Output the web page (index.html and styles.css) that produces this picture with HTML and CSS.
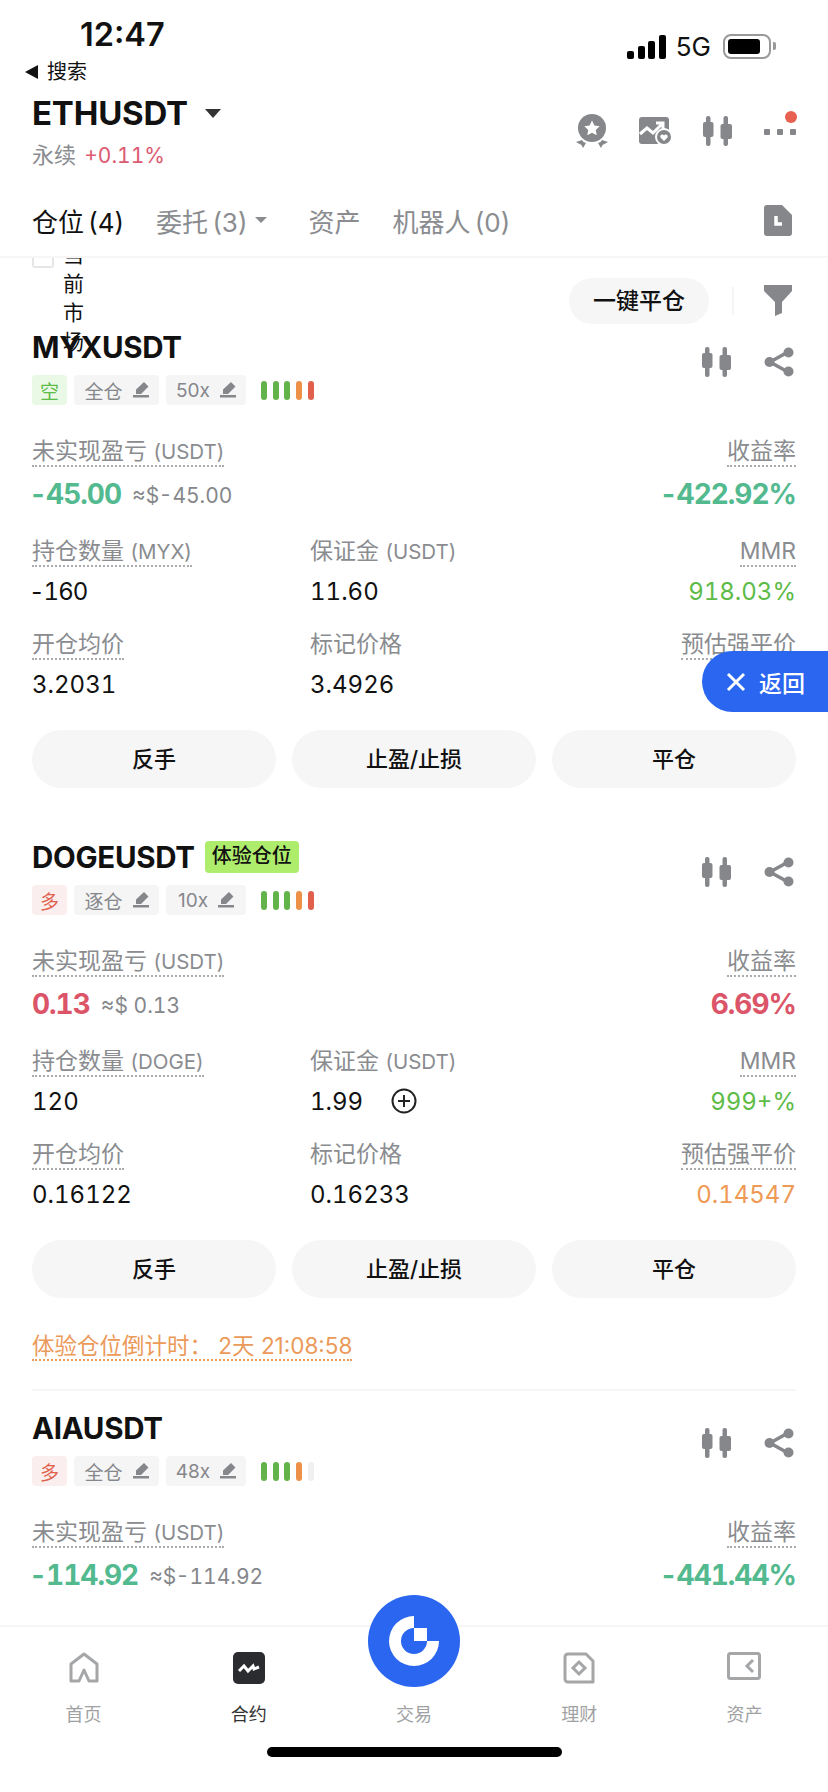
FILE: index.html
```html
<!DOCTYPE html>
<html lang="zh">
<head>
  <meta charset="UTF-8">
  <title>ETHUSDT</title>
  <link rel="stylesheet" href="styles.css">
</head>
<body>
  <svg class="defs" width="0" height="0">
    <symbol id="candle" viewBox="0 0 30 30">
      <rect x="3" y="0" width="4.500" height="30" rx="2" fill="#85878b"/>
      <rect x="0" y="6" width="10.500" height="15" rx="2" fill="#85878b"/>
      <rect x="20.500" y="0" width="4.500" height="30" rx="2" fill="#85878b"/>
      <rect x="17.500" y="8" width="11.500" height="15" rx="2" fill="#85878b"/>
    </symbol>
    <symbol id="share" viewBox="0 0 30 30">
      <path d="M24 5 6 15l18 10" fill="none" stroke="#85878b" stroke-width="3.500"/>
      <circle cx="24.500" cy="5.500" r="5" fill="#85878b"/>
      <circle cx="5.500" cy="15" r="5" fill="#85878b"/>
      <circle cx="24.500" cy="24.500" r="5" fill="#85878b"/>
    </symbol>
    <symbol id="pencil" viewBox="0 0 16 16">
      <path d="M11 0l4.500 4.500-7.500 7.500H3V7.500zM0 13h16v2.500H0z" fill="#85878b"/>
    </symbol>
  </svg>

  <div class="page">
    <div class="status">
      <span class="time">12:47</span>
      <div class="status-right">
        <span class="signal"><i></i><i></i><i></i><i></i></span>
        <span class="net">5G</span>
        <span class="battery"><b></b></span>
      </div>
    </div>
    <div class="back"><span class="back-arrow"></span>搜索</div>

    <div class="head">
      <div>
        <div class="symbol">ETHUSDT<span class="caret"></span></div>
        <div class="sub">永续 <span class="up">+0.11%</span></div>
      </div>
      <div class="head-icons">
        <svg width="34" height="35" viewBox="0 0 34 35"><circle cx="17" cy="14" r="14" fill="#85878b"/><path d="M17 6.500l2.400 4.900 5.300.8-3.900 3.700.9 5.300-4.700-2.500-4.700 2.500.9-5.300-3.900-3.700 5.300-.8z" fill="#fff"/><path d="M1 28l6-2 1.500 2L11 29l-3 5-1.500-3zM33 28l-6-2-1.500 2-2.500 1 3 5 1.500-3z" fill="#85878b"/></svg>
        <svg width="34" height="28" viewBox="0 0 34 28"><path d="M3 0h24a3 3 0 0 1 3 3v24H3a3 3 0 0 1-3-3V3a3 3 0 0 1 3-3z" fill="#85878b"/><path d="M1 17l7-6 6 5 9-9M17 6h7v7" fill="none" stroke="#fff" stroke-width="3"/><circle cx="25" cy="20" r="8" fill="#85878b" stroke="#fff" stroke-width="2"/><path d="M25 24l-3.500-3.500a2 2 0 0 1 3.500-2 2 2 0 0 1 3.500 2z" fill="#fff"/></svg>
        <svg width="30" height="30"><use href="#candle"/></svg>
        <span class="more"><i></i><i></i><i></i><b></b></span>
      </div>
    </div>

    <div class="tabs">
      <span class="tab active">仓位 (4)</span>
      <span class="tab tab-orders">委托 (3)<span class="tab-caret"></span></span>
      <span class="tab">资产</span>
      <span class="tab">机器人 (0)</span>
      <svg class="tab-doc" width="28" height="31" viewBox="0 0 28 31"><path d="M3 0h15l10 10v18a3 3 0 0 1-3 3H3a3 3 0 0 1-3-3V3a3 3 0 0 1 3-3z" fill="#85878b"/><path d="M12 11v8h6" fill="none" stroke="#fff" stroke-width="3.500"/></svg>
    </div>

    <div class="content">
      <div class="scroll">
        <div class="toolbar">
          <span class="check"></span>
          <span class="check-label">当前市场</span>
          <span class="close-all">一键平仓</span>
          <span class="tool-sep"></span>
          <svg width="28" height="31" viewBox="0 0 28 31"><path d="M0 0h28v6L18 17v11l-7 3V17L0 6z" fill="#85878b"/></svg>
        </div>

        <div class="card">
          <div class="card-top">
            <div class="card-name">MYXUSDT</div>
            <div class="card-icons">
              <svg width="30" height="30"><use href="#candle"/></svg>
              <svg width="30" height="30"><use href="#share"/></svg>
            </div>
          </div>
          <div class="tags">
            <span class="tag side short">空</span>
            <span class="tag mode">全仓<svg width="16" height="16"><use href="#pencil"/></svg></span>
            <span class="tag lev">50x<svg width="16" height="16"><use href="#pencil"/></svg></span>
            <span class="bars"><i class="g"></i><i class="g"></i><i class="g"></i><i class="o"></i><i class="r"></i></span>
          </div>
          <div class="pnl-row">
            <div>
              <div><span class="label">未实现盈亏 <small>(USDT)</small></span></div>
              <div class="pnl"><span class="pnl-num down">-45.00</span><span class="pnl-usd neg">≈$ -45.00</span></div>
            </div>
            <div class="right">
              <div><span class="label">收益率</span></div>
              <div class="pnl"><span class="pnl-num down">-422.92%</span></div>
            </div>
          </div>
          <div class="grid">
            <div><span class="label">持仓数量 <small>(MYX)</small></span><div class="val neg">-160</div></div>
            <div><span class="label plain">保证金 <small>(USDT)</small></span><div class="val">11.60</div></div>
            <div class="right"><span class="label">MMR</span><div class="val mmr">918.03%</div></div>
            <div><span class="label">开仓均价</span><div class="val">3.2031</div></div>
            <div><span class="label plain">标记价格</span><div class="val">3.4926</div></div>
            <div class="right"><span class="label">预估强平价</span><div class="val"></div></div>
          </div>
          <div class="btns"><span class="btn">反手</span><span class="btn">止盈/止损</span><span class="btn">平仓</span></div>
        </div>

        <div class="card">
          <div class="card-top">
            <div class="card-name">DOGEUSDT<span class="trial">体验仓位</span></div>
            <div class="card-icons">
              <svg width="30" height="30"><use href="#candle"/></svg>
              <svg width="30" height="30"><use href="#share"/></svg>
            </div>
          </div>
          <div class="tags">
            <span class="tag side long">多</span>
            <span class="tag mode">逐仓<svg width="16" height="16"><use href="#pencil"/></svg></span>
            <span class="tag lev">10x<svg width="16" height="16"><use href="#pencil"/></svg></span>
            <span class="bars"><i class="g"></i><i class="g"></i><i class="g"></i><i class="o"></i><i class="r"></i></span>
          </div>
          <div class="pnl-row">
            <div>
              <div><span class="label">未实现盈亏 <small>(USDT)</small></span></div>
              <div class="pnl"><span class="pnl-num gain">0.13</span><span class="pnl-usd">≈$ 0.13</span></div>
            </div>
            <div class="right">
              <div><span class="label">收益率</span></div>
              <div class="pnl"><span class="pnl-num gain">6.69%</span></div>
            </div>
          </div>
          <div class="grid">
            <div><span class="label">持仓数量 <small>(DOGE)</small></span><div class="val">120</div></div>
            <div>
              <span class="label plain">保证金 <small>(USDT)</small></span>
              <div class="val">1.99<svg class="plus" width="26" height="26" viewBox="0 0 26 26"><circle cx="13" cy="13" r="11.500" fill="none" stroke="#222" stroke-width="2"/><path d="M13 7v12M7 13h12" stroke="#222" stroke-width="2"/></svg></div>
            </div>
            <div class="right"><span class="label">MMR</span><div class="val mmr">999+%</div></div>
            <div><span class="label">开仓均价</span><div class="val">0.16122</div></div>
            <div><span class="label plain">标记价格</span><div class="val">0.16233</div></div>
            <div class="right"><span class="label">预估强平价</span><div class="val warn">0.14547</div></div>
          </div>
          <div class="btns"><span class="btn">反手</span><span class="btn">止盈/止损</span><span class="btn">平仓</span></div>
          <div class="countdown"><span>体验仓位倒计时： 2天 21:08:58</span></div>
        </div>

        <div class="card last">
          <div class="card-top">
            <div class="card-name">AIAUSDT</div>
            <div class="card-icons">
              <svg width="30" height="30"><use href="#candle"/></svg>
              <svg width="30" height="30"><use href="#share"/></svg>
            </div>
          </div>
          <div class="tags">
            <span class="tag side long">多</span>
            <span class="tag mode">全仓<svg width="16" height="16"><use href="#pencil"/></svg></span>
            <span class="tag lev">48x<svg width="16" height="16"><use href="#pencil"/></svg></span>
            <span class="bars"><i class="g"></i><i class="g"></i><i class="g"></i><i class="o"></i><i class="e"></i></span>
          </div>
          <div class="pnl-row">
            <div>
              <div><span class="label">未实现盈亏 <small>(USDT)</small></span></div>
              <div class="pnl"><span class="pnl-num down">-114.92</span><span class="pnl-usd neg">≈$ -114.92</span></div>
            </div>
            <div class="right">
              <div><span class="label">收益率</span></div>
              <div class="pnl"><span class="pnl-num down">-441.44%</span></div>
            </div>
          </div>
        </div>
      </div>
    </div>

    <div class="nav">
      <div class="nav-items">
        <div class="nav-item">
          <svg width="32" height="32" viewBox="0 0 32 32"><path d="M3 29h8l5-11 5 11h8V12L16 2 3 12z" fill="none" stroke="#a5a6a8" stroke-width="3" stroke-linejoin="round"/></svg>
          <span>首页</span>
        </div>
        <div class="nav-item active">
          <svg width="32" height="32" viewBox="0 0 32 32"><rect width="32" height="32" rx="5" fill="#2b2c30"/><path d="M6 19l5-5 4 5 5-5 1 3 5-2" fill="none" stroke="#fff" stroke-width="3"/></svg>
          <span>合约</span>
        </div>
        <div class="nav-item"><span class="nav-gap"></span><span>交易</span></div>
        <div class="nav-item">
          <svg width="32" height="32" viewBox="0 0 32 32"><path d="M5 2h18l7 7v21H5a3 3 0 0 1-3-3V5a3 3 0 0 1 3-3z" fill="none" stroke="#a5a6a8" stroke-width="3" stroke-linejoin="round"/><path d="M16 10l6 6-6 6-6-6z" fill="none" stroke="#a5a6a8" stroke-width="3"/></svg>
          <span>理财</span>
        </div>
        <div class="nav-item">
          <svg width="34" height="28" viewBox="0 0 34 28"><rect x="1.500" y="1.500" width="31" height="25" rx="2" fill="none" stroke="#a5a6a8" stroke-width="3"/><path d="M26 8l-6 6 6 6" fill="none" stroke="#a5a6a8" stroke-width="3"/></svg>
          <span>资产</span>
        </div>
      </div>
      <div class="home-bar"></div>
    </div>

    <div class="trade">
      <svg width="92" height="92" viewBox="-46 -46 92 92"><circle r="46" fill="#2a66f0"/><path d="M0-25A25 25 0 1 0 25 0H13A13 13 0 1 1 0-13z" fill="#fff"/><rect x="0" y="-13" width="13" height="13" fill="#fff"/></svg>
    </div>
    <div class="float-back">
      <svg width="20" height="20" viewBox="0 0 20 20"><path d="M2 2l16 16M18 2L2 18" stroke="#fff" stroke-width="3"/></svg>
      返回
    </div>
  </div>
</body>
</html>
```

FILE: styles.css
```css
* {
  box-sizing: border-box;
}

html, body {
  margin: 0;
  padding: 0;
  background: #fff;
}

body {
  font-family: Inter, "Noto Sans CJK SC", sans-serif;
  color: #111;
}

.defs {
  position: absolute;
}

.page {
  position: relative;
  width: 828px;
  height: 1792px;
  overflow: hidden;
  display: flex;
  flex-direction: column;
}

/* Status bar */
.status {
  height: 60px;
  padding: 16px 57px 0 80px;
  display: flex;
  justify-content: space-between;
  align-items: flex-start;
}

.time {
  font-size: 32.500px;
  line-height: 38px;
  font-weight: 600;
}

.status-right {
  display: flex;
  align-items: center;
  gap: 10px;
  padding-top: 18px;
}

.signal {
  display: flex;
  align-items: flex-end;
  gap: 3.500px;
}

.signal i {
  width: 7px;
  background: #000;
  border-radius: 2px;
}

.signal i:nth-child(1) { height: 8px; }
.signal i:nth-child(2) { height: 13px; }
.signal i:nth-child(3) { height: 18px; }
.signal i:nth-child(4) { height: 24px; }

.net {
  font-size: 26px;
  line-height: 24px;
}

.battery {
  position: relative;
  width: 48px;
  height: 25px;
  margin-left: 2px;
  border: 2px solid #999;
  border-radius: 8px;
  padding: 3px;
}

.battery b {
  display: block;
  width: 32px;
  height: 15px;
  background: #000;
  border-radius: 3px;
}

.battery:after {
  content: "";
  position: absolute;
  right: -7px;
  top: 6px;
  width: 3px;
  height: 8px;
  background: #999;
  border-radius: 0 2px 2px 0;
}

.back {
  height: 24px;
  padding-left: 25px;
  display: flex;
  align-items: center;
  gap: 9px;
  font-size: 20px;
  line-height: 24px;
}

.back-arrow {
  width: 0;
  height: 0;
  border-top: 7px solid transparent;
  border-bottom: 7px solid transparent;
  border-right: 13px solid #111;
}

/* Header */
.head {
  height: 84px;
  padding: 9px 32px 0;
  display: flex;
  justify-content: space-between;
}

.symbol {
  display: flex;
  align-items: center;
  font-size: 33px;
  line-height: 40px;
  font-weight: 700;
  letter-spacing: -0.2px;
}

.caret {
  width: 0;
  height: 0;
  margin-left: 17px;
  border-left: 8px solid transparent;
  border-right: 8px solid transparent;
  border-top: 9px solid #333;
}

.sub {
  margin-top: 8px;
  font-size: 22px;
  line-height: 28px;
  color: #8a8c90;
}

.up {
  margin-left: 2px;
  color: #dc5a70;
  font-size: 21px;
  font-feature-settings: "tnum";
}

.head-icons {
  display: flex;
  align-items: center;
  gap: 30px;
  height: 56px;
  margin-top: 10px;
}

.more {
  position: relative;
  display: flex;
  gap: 7px;
  margin-top: 2px;
  margin-left: 1px;
}

.more i {
  width: 6px;
  height: 6px;
  border-radius: 1px;
  background: #85878b;
}

.more b {
  position: absolute;
  right: -1px;
  top: -18px;
  width: 12px;
  height: 12px;
  border-radius: 50%;
  background: #e8604f;
}

/* Tabs */
.tabs {
  height: 90px;
  padding: 16px 36px 0 32px;
  display: flex;
  align-items: center;
  gap: 32px;
  border-bottom: 2px solid #f6f6f6;
}

.tab {
  display: flex;
  align-items: center;
  font-size: 26px;
  word-spacing: -3px;
  color: #8a8c90;
}

.tab.active {
  color: #111;
}

.tab-orders {
  margin-right: 9px;
}

.tab-caret {
  width: 0;
  height: 0;
  margin-left: 8px;
  border-left: 6px solid transparent;
  border-right: 6px solid transparent;
  border-top: 6px solid #8a8c90;
}

.tab-doc {
  margin-left: auto;
}

/* Scrolling list */
.content {
  flex: 1;
  min-height: 0;
  overflow: hidden;
}

.scroll {
  margin-top: -10px;
}

.toolbar {
  height: 105px;
  margin-bottom: -28px;
  padding: 0 36px 0 32px;
  display: flex;
  align-items: center;
}

.check {
  align-self: flex-start;
  width: 22px;
  height: 20px;
  border: 2px solid #e6e6e6;
  border-radius: 3px;
}

.check-label {
  align-self: flex-start;
  width: 22px;
  margin: -8px 0 0 9px;
  font-size: 21px;
  line-height: 29px;
  color: #111;
}

.close-all {
  width: 140px;
  height: 46px;
  margin-left: auto;
  margin-right: -2px;
  border-radius: 23px;
  background: #f6f6f6;
  font-size: 23px;
  line-height: 46px;
  font-weight: 500;
  text-align: center;
}

.tool-sep {
  width: 2px;
  height: 28px;
  margin: 0 30px 0 25px;
  background: #f4f4f4;
}

.card {
  padding: 0 32px;
}

.card-top {
  height: 44px;
  display: flex;
  justify-content: space-between;
  align-items: center;
}

.card-name {
  display: flex;
  align-items: center;
  font-size: 29.500px;
  font-weight: 700;
  letter-spacing: -0.3px;
}

.trial {
  margin-left: 10px;
  padding: 0 7px;
  height: 32px;
  border-radius: 4px;
  background: #aeed6c;
  font-size: 20px;
  line-height: 31px;
  font-weight: 500;
  letter-spacing: 0;
}

.card-icons {
  display: flex;
  gap: 32px;
  margin-top: 30px;
  margin-right: 2px;
}

.tags {
  margin-top: 6px;
  height: 30px;
  display: flex;
  align-items: center;
  gap: 7px;
}

.tag {
  height: 30px;
  display: flex;
  align-items: center;
  justify-content: center;
  border-radius: 4px;
  background: #f5f5f6;
  font-size: 19px;
  color: #85878b;
}

.tag svg {
  margin-left: 10px;
}

.side {
  width: 35px;
}

.short {
  background: #eaf8e6;
  color: #5dbb47;
}

.long {
  background: #fbeeee;
  color: #e0604c;
}

.mode {
  width: 85px;
}

.lev {
  width: 80px;
}

.bars {
  display: flex;
  gap: 5.700px;
  margin-left: 8px;
}

.bars i {
  width: 6px;
  height: 19px;
  border-radius: 3px;
}

.bars .g { background: #62b34a; }
.bars .o { background: #ee9148; }
.bars .r { background: #e0604c; }
.bars .e { background: #f0f0f0; }

.label {
  display: inline-block;
  font-size: 23px;
  line-height: 27px;
  color: #8a8c90;
  border-bottom: 2px dotted #a9abae;
}

.label small {
  font-size: 20.500px;
}

.label.plain {
  border-bottom-color: transparent;
}

.right {
  text-align: right;
}

.pnl-row {
  margin-top: 33px;
  display: flex;
  justify-content: space-between;
}

.pnl {
  height: 42px;
  margin-top: 6px;
  display: flex;
  align-items: center;
}

.right .pnl {
  justify-content: flex-end;
}

.pnl-num {
  font-size: 28px;
  font-weight: 700;
  letter-spacing: -1px;
  font-feature-settings: "tnum";
}

.pnl-num.down {
  margin-left: -3px;
}

.pnl-usd {
  margin-left: 11px;
  padding-top: 3px;
  font-size: 21px;
  color: #85878b;
  font-feature-settings: "tnum";
}

.pnl-usd.neg {
  word-spacing: -6px;
}

.down { color: #53b98f; }
.gain { color: #dc5468; }

.grid {
  margin-top: 23px;
  display: grid;
  grid-template-columns: 278px 1fr auto;
  row-gap: 22px;
}

.val {
  height: 36px;
  margin-top: 6px;
  display: flex;
  align-items: center;
  font-size: 24px;
  font-feature-settings: "tnum";
}

.val.neg {
  margin-left: -3px;
  letter-spacing: -1px;
}

.right .val {
  justify-content: flex-end;
}

.mmr { color: #5dbb47; }
.warn { color: #ef9a54; }

.plus {
  margin-left: 28px;
}

.btns {
  margin-top: 28px;
  display: flex;
  gap: 16px;
}

.btn {
  flex: 1;
  height: 58px;
  border-radius: 29px;
  background: #f6f6f6;
  font-size: 22px;
  line-height: 58px;
  font-weight: 500;
  text-align: center;
}

.card + .card {
  margin-top: 47px;
}

.countdown {
  margin-top: 33px;
  padding-bottom: 28px;
  border-bottom: 2px solid #f6f6f6;
  font-size: 22.500px;
  line-height: 30px;
  color: #eb9a5a;
}

.countdown span {
  border-bottom: 2px dotted #eb9a5a;
}

.card.last {
  margin-top: 15px;
}

/* Bottom nav */
.nav {
  height: 167px;
  flex-shrink: 0;
  background: #fff;
  border-top: 2px solid #f6f6f6;
  position: relative;
}

.nav-items {
  padding-top: 25px;
  display: grid;
  grid-template-columns: repeat(5, 1fr);
  padding-left: 1px;
  padding-right: 1px;
}

.nav-item {
  display: flex;
  flex-direction: column;
  align-items: center;
  height: 76px;
  justify-content: space-between;
  font-size: 18px;
  line-height: 26px;
  color: #a0a1a3;
}

.nav-item.active {
  color: #333;
}

.nav-gap {
  height: 32px;
}

.home-bar {
  width: 295px;
  height: 10px;
  margin: 19px auto 0;
  background: #000;
  border-radius: 5px;
}

/* Overlays */
.trade {
  position: absolute;
  left: 368px;
  top: 1595px;
  width: 92px;
  height: 92px;
}

.trade svg {
  display: block;
}

.float-back {
  position: absolute;
  right: 0;
  top: 651px;
  width: 126px;
  height: 61px;
  padding-left: 24px;
  display: flex;
  align-items: center;
  gap: 13px;
  border-radius: 31px 0 0 31px;
  background: #2a66f0;
  color: #fff;
  font-size: 23px;
  font-weight: 500;
}
```
